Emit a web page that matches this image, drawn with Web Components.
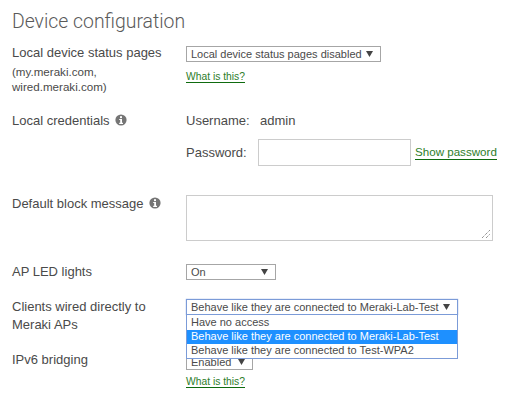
<!DOCTYPE html>
<html><head><meta charset="utf-8"><style>
html,body{margin:0;padding:0;background:#fff}
body{font-family:"Liberation Sans",Arial,sans-serif;font-size:13px;color:#4a4a4a;width:521px;height:403px;overflow:hidden}
</style></head><body>
<device-config></device-config>
<script>
const define=(n,css,html)=>{customElements.define(n,class extends HTMLElement{constructor(){super();this.attachShadow({mode:'open'}).innerHTML=`<style>${css}</style>${html}`}})};
define('info-icon',`:host{display:inline-block;width:12px;height:12px;vertical-align:-1px;margin-left:2px}svg{display:block}`,
`<svg width="12" height="12" viewBox="0 0 12 12"><circle cx="6" cy="6" r="5.6" fill="#757575"/><rect x="5" y="2.2" width="2" height="1.9" fill="#fff"/><path d="M4.2 5h2.8v3.8h1V10H4.2V8.8h1V6.1h-1z" fill="#fff"/></svg>`);
define('help-link',`:host{display:inline-block;font-size:10.3px;line-height:12px;color:#2d7d2a;border-bottom:1px solid #0f6b0f;height:11px}`,`<slot></slot>`);
define('text-link',`:host{display:inline-block;font-size:11.6px;line-height:14px;color:#2d7d2a;border-bottom:1px solid #0f6b0f}`,`<slot></slot>`);
define('fake-select',`:host{display:flex;box-sizing:border-box;height:16px;margin-top:1px;align-items:center;justify-content:space-between;border:1px solid #a6a6a6;background:#fff;padding:0 7px 0 4px;font-size:11px;line-height:14px;color:#4a4a4a;white-space:nowrap}
:host([open]){border:1px solid #7b9bd8;box-shadow:0 0 1px #7b9bd8}
svg{display:block;flex:none}`,
`<slot></slot><svg width="7" height="6" viewBox="0 0 7 6"><path d="M0 0h7L3.5 6z" fill="#444"/></svg>`);
define('select-popup',`:host{display:block;position:absolute;left:0;right:0;top:16px;box-sizing:border-box;border:1px solid #7b9bd8;border-top:none;background:#fff;font-size:11px;z-index:2;height:44px;padding-top:1px}`,`<slot></slot>`);
define('select-option',`:host{display:block;height:14px;line-height:13px;padding-left:4px;color:#4a4a4a;white-space:nowrap}
:host([selected]){background:#1e90ff;color:#fff}`,`<slot></slot>`);
define('form-row',`:host{display:grid;grid-template-columns:174px 1fr;box-sizing:border-box}
.l{line-height:18px}`,`<div class="l"><slot name="label"></slot></div><div><slot></slot></div>`);
define('device-config',`:host{display:block;padding:0 12px;position:relative}
h1{font:300 19.4px/24px Roboto,"Liberation Sans",sans-serif;color:#5a5a5a;margin:0;padding-top:10px;height:36px;box-sizing:border-box}
.small{font-size:11.6px;line-height:15px;display:block;padding-top:2px}
.r1{height:76px;padding-top:8px}
.r2{height:83px}
.r3{height:68px}
.r4{height:35px}
.r5{height:53px}
.what{margin-top:9px}
.u{height:18px;line-height:18px;display:flex}
.u b{font-weight:400;width:74px}
.p{display:flex;align-items:center;margin-top:9px;height:27px}
.p span{width:72px}
.inp{box-sizing:border-box;width:153px;height:27px;border:1px solid #ccc;background:#fff;margin-right:4px}
.ta{box-sizing:border-box;width:307px;height:46px;border:1px solid #ccc;position:relative;margin-top:0}
.ta svg{position:absolute;right:1px;bottom:1px}
.wrap{position:relative;width:272px}`,
`<h1>Device configuration</h1>
<form-row class="r1"><div slot="label">Local device status pages<span class="small">(my.meraki.com,<br>wired.meraki.com)</span></div>
  <div><fake-select style="width:195px;margin-top:2px">Local device status pages disabled</fake-select><help-link class="what">What is this?</help-link></div></form-row>
<form-row class="r2"><div slot="label">Local credentials <info-icon></info-icon></div>
  <div><div class="u"><b>Username:</b><span>admin</span></div>
  <div class="p"><span>Password:</span><div class="inp"></div><text-link>Show password</text-link></div></div></form-row>
<form-row class="r3"><div slot="label">Default block message <info-icon></info-icon></div>
  <div class="ta"><svg width="10" height="10" viewBox="0 0 10 10"><path d="M1 9L9 1M5 9L9 5" stroke="#666" stroke-width="1" stroke-dasharray="1 1" fill="none"/></svg></div></form-row>
<form-row class="r4"><div slot="label">AP LED lights</div><div><fake-select style="width:90px">On</fake-select></div></form-row>
<form-row class="r5"><div slot="label">Clients wired directly to<br>Meraki APs</div>
  <div class="wrap"><fake-select open>Behave like they are connected to Meraki-Lab-Test</fake-select>
  <select-popup><select-option>Have no access</select-option><select-option selected>Behave like they are connected to Meraki-Lab-Test</select-option><select-option>Behave like they are connected to Test-WPA2</select-option></select-popup></div></form-row>
<form-row class="r6"><div slot="label">IPv6 bridging</div><div><fake-select style="width:67px;margin-top:3px">Enabled</fake-select><help-link style="margin-top:6px">What is this?</help-link></div></form-row>`);
</script>
</body></html>
